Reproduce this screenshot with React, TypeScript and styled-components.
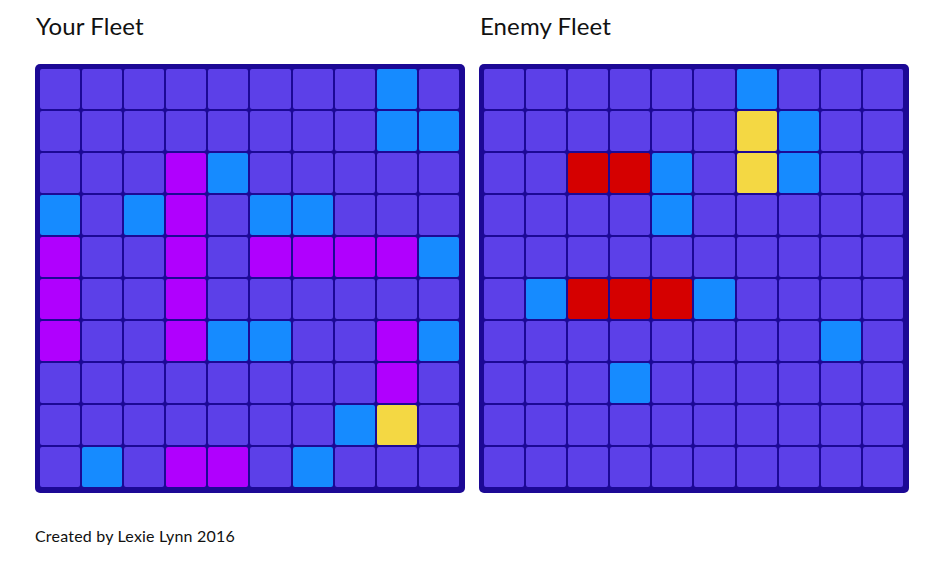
import React from "react";
import styled, { createGlobalStyle } from "styled-components";

const Global = createGlobalStyle`
  html, body { margin: 0; padding: 0; background: #ffffff; }
  body { font-family: Lato, "Open Sans", sans-serif; color: #111; }
`;

const Page = styled.div`
  padding: 12px 0 0 35px;
  width: 944px;
  height: 564px;
  box-sizing: border-box;
`;

const Boards = styled.div`
  display: flex;
  gap: 14px;
`;

const Column = styled.section`
  display: flex;
  flex-direction: column;
`;

const Title = styled.h2`
  margin: 0 0 24px 1px;
  font-size: 24px;
  line-height: 28px;
  font-weight: 400;
  letter-spacing: 0.1px;
`;

const Board = styled.div`
  width: 430px;
  height: 429px;
  box-sizing: border-box;
  background: #1c0995;
  border-radius: 5px;
  padding: 5px 6px 6px 5px;
  display: grid;
  grid-template-columns: repeat(10, 1fr);
  grid-template-rows: repeat(10, 1fr);
  gap: 2px;
`;

type Kind = "w" | "b" | "m" | "y" | "r";

const colors: Record<Kind, string> = {
  w: "#5c40e8",
  b: "#168bff",
  m: "#b000fe",
  y: "#f4d843",
  r: "#d50000",
};

const Cell = styled.div<{ $kind: Kind }>`
  background: ${(p) => colors[p.$kind]};
  border-radius: 2px;
`;

const Footer = styled.footer`
  margin-top: 33px;
  font-size: 16px;
  line-height: 20px;
  letter-spacing: 0.2px;
`;

const yourFleet = [
  "wwwwwwwwbw",
  "wwwwwwwwbb",
  "wwwmbwwwww",
  "bwbmwbbwww",
  "mwwmwmmmmb",
  "mwwmwwwwww",
  "mwwmbbwwmb",
  "wwwwwwwwmw",
  "wwwwwwwbyw",
  "wbwmmwbwww",
];

const enemyFleet = [
  "wwwwwwbwww",
  "wwwwwwybww",
  "wwrrbwybww",
  "wwwwbwwwww",
  "wwwwwwwwww",
  "wbrrrbwwww",
  "wwwwwwwwbw",
  "wwwbwwwwww",
  "wwwwwwwwww",
  "wwwwwwwwww",
];

const Grid = ({ rows }: { rows: string[] }) => (
  <Board>
    {rows.flatMap((row, r) =>
      row.split("").map((c, i) => <Cell key={`${r}-${i}`} $kind={c as Kind} />)
    )}
  </Board>
);

export default function App() {
  return (
    <Page>
      <Global />
      <Boards>
        <Column>
          <Title>Your Fleet</Title>
          <Grid rows={yourFleet} />
        </Column>
        <Column>
          <Title>Enemy Fleet</Title>
          <Grid rows={enemyFleet} />
        </Column>
      </Boards>
      <Footer>Created by Lexie Lynn 2016</Footer>
    </Page>
  );
}
